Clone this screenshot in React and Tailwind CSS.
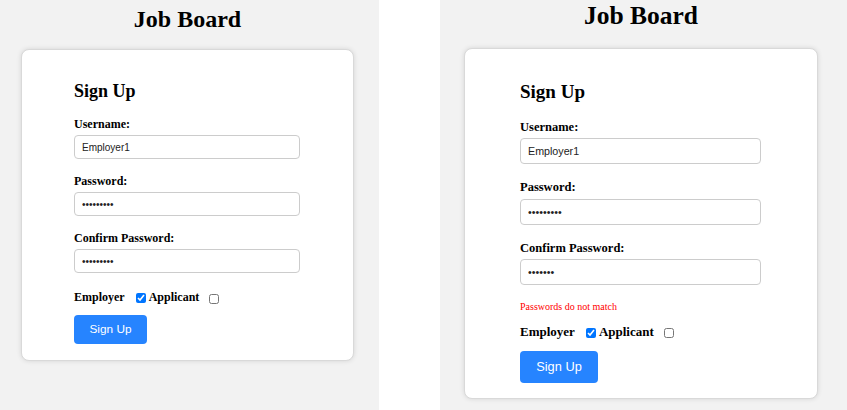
import { useState } from 'react';

const serif = "font-['Liberation_Serif','Times_New_Roman',serif]";
const sans = "font-['Liberation_Sans',Arial,sans-serif]";

// Two screenshots of the same sign-up form, the right one taken a little larger
const sizes = {
  small: {
    panel: 'w-[379px]',
    column: 'ml-[21px] w-[333px]',
    title: 'pt-[5px] text-[24px] leading-[28px]',
    card: 'mt-[16px] pt-[30px] pb-[16px] pl-[52px]',
    heading: 'text-[18px] leading-[22px]',
    label: 'text-[12px] leading-[14px]',
    firstLabel: 'mt-[15px]',
    nextLabel: 'mt-[15px]',
    input: 'mt-[4px] w-[226px] h-[24px] px-[7px] text-[10px]',
    error: 'mt-[16px] text-[10px] leading-[12px]',
    row: 'mt-[17px] text-[12px] leading-[14px]',
    box: 'w-[10px] h-[10px]',
    button: 'mt-[11px] h-[29px] w-[73px] text-[11.8px]',
  },
  large: {
    panel: 'w-[407px]',
    column: 'ml-[24px] w-[354px]',
    title: 'pt-[1px] text-[25.5px] leading-[30px]',
    card: 'mt-[17px] pt-[31px] pb-[15px] pl-[55px]',
    heading: 'text-[19px] leading-[23px]',
    label: 'text-[12.5px] leading-[15px]',
    firstLabel: 'mt-[16.5px]',
    nextLabel: 'mt-[16px]',
    input: 'mt-[3.5px] w-[241px] h-[26px] px-[7px] text-[10.7px]',
    error: 'mt-[16px] text-[10px] leading-[12px]',
    row: 'mt-[11px] text-[13px] leading-[15px]',
    box: 'w-[10px] h-[10px]',
    button: 'mt-[12px] h-[32px] w-[78px] text-[12.8px]',
  },
};

function Field({ s, label, first, type, value }) {
  const [val, setVal] = useState(value);
  return (
    <div>
      <div className={`${s.label} ${first ? s.firstLabel : s.nextLabel} font-bold text-black`}>{label}</div>
      <input
        type={type}
        value={val}
        onChange={(e) => setVal(e.target.value)}
        className={`${s.input} ${sans} block rounded-[4px] border border-[#cccccc] bg-white text-[#222] outline-none`}
      />
    </div>
  );
}

function SignUpPanel({ size, confirm, error }) {
  const s = sizes[size];
  return (
    <div className={`${s.panel} ${serif} h-[410px] shrink-0 bg-[#f2f2f2]`}>
      <div className={s.column}>
        <h1 className={`${s.title} text-center font-bold text-black`}>Job Board</h1>
        <div className={`${s.card} rounded-[8px] border border-[#d9d9d9] bg-white shadow-[0_0_5px_rgba(0,0,0,0.12)]`}>
          <h3 className={`${s.heading} font-bold text-black`}>Sign Up</h3>
          <Field s={s} first label="Username:" type="text" value="Employer1" />
          <Field s={s} label="Password:" type="password" value="123456789" />
          <Field s={s} label="Confirm Password:" type="password" value={confirm} />
          {error && <div className={`${s.error} text-[#ff0000]`}>Passwords do not match</div>}
          <div className={`${s.row} flex items-center font-bold text-black`}>
            <span>Employer</span>
            <input type="checkbox" defaultChecked className={`${s.box} ml-[11px] mr-[3px] mt-[2px]`} />
            <span>Applicant</span>
            <input type="checkbox" className={`${s.box} ml-[10px] mt-[3px]`} />
          </div>
          <button
            className={`${s.button} ${sans} block rounded-[4px] bg-[#2684ff] text-white`}
          >
            Sign Up
          </button>
        </div>
      </div>
    </div>
  );
}

export default function App() {
  return (
    <div className="flex h-[410px] w-[847px] overflow-hidden bg-white">
      <SignUpPanel size="small" confirm="123456789" />
      <div className="w-[61px] shrink-0 bg-white" />
      <SignUpPanel size="large" confirm="1234567" error />
    </div>
  );
}
